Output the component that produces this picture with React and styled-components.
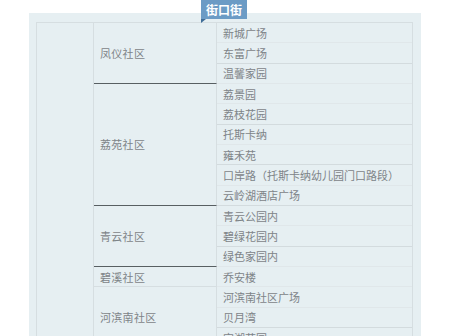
import React from "react";
import styled, { createGlobalStyle } from "styled-components";

const communities = [
  { name: "凤仪社区", places: ["新城广场", "东富广场", "温馨家园"], closed: true },
  {
    name: "荔苑社区",
    places: [
      "荔景园",
      "荔枝花园",
      "托斯卡纳",
      "雍禾苑",
      "口岸路（托斯卡纳幼儿园门口路段）",
      "云岭湖酒店广场",
    ],
    closed: true,
  },
  { name: "青云社区", places: ["青云公园内", "碧绿花园内", "绿色家园内"], closed: true },
  { name: "碧溪社区", places: ["乔安楼"], closed: false },
  { name: "河滨南社区", places: ["河滨南社区广场", "贝月湾", "宝湖花园"], closed: false },
];

const GlobalStyle = createGlobalStyle`
  body {
    margin: 0;
    background: #ffffff;
    font-family: "Noto Sans CJK SC", "Noto Sans", sans-serif;
  }
`;

const Page = styled.div`
  padding: 13px 0 0 29px;
  height: 336px;
  box-sizing: border-box;
  overflow: hidden;
`;

const Panel = styled.div`
  position: relative;
  width: 392px;
  padding: 9px 8px 0 7px;
  box-sizing: border-box;
  background: #e6eff2;
`;

const Badge = styled.div`
  position: absolute;
  left: 172px;
  top: -13px;
  height: 19px;
  padding: 0 5px;
  display: flex;
  align-items: center;
  background: #6b9bc5;
  color: #ffffff;
  font-size: 12px;
  font-weight: 700;
  line-height: 19px;

  &::after {
    content: "";
    position: absolute;
    left: 0;
    bottom: -4px;
    border-top: 4px solid #3f6d98;
    border-right: 5px solid transparent;
  }
`;

const Table = styled.div`
  display: flex;
  border-top: 1px solid #d6dee1;
  border-left: 1px solid #d6dee1;
`;

const StreetCell = styled.div`
  width: 56px;
  flex-shrink: 0;
  border-right: 1px solid #d6dee1;
`;

const Communities = styled.div`
  flex: 1;
  display: flex;
  flex-direction: column;
`;

const Community = styled.div`
  display: grid;
  grid-template-columns: 123px 1fr;
`;

const CommunityName = styled.div`
  display: flex;
  align-items: center;
  padding-left: 6px;
  border-right: 1px solid #d6dee1;
  border-bottom: 1px solid ${(p) => (p.$closed ? "#585f62" : "#d6dee1")};
  color: #7e8488;
  font-size: 11px;
  letter-spacing: 0.3px;
`;

const Places = styled.div`
  display: flex;
  flex-direction: column;
  border-right: 1px solid #d6dee1;
`;

const Place = styled.div`
  height: calc(61px / 3);
  box-sizing: border-box;
  padding-left: 6px;
  display: flex;
  align-items: center;
  border-bottom: 1px solid ${(p) => (p.$soft ? "#e0e7ea" : "#d3dbde")};
  color: #7e8488;
  font-size: 11px;
  white-space: nowrap;
`;

export default function App() {
  return (
    <>
      <GlobalStyle />
      <Page>
        <Panel>
          <Badge>街口街</Badge>
          <Table>
            <StreetCell />
            <Communities>
              {communities.map((c) => (
                <Community key={c.name}>
                  <CommunityName $closed={c.closed}>{c.name}</CommunityName>
                  <Places>
                    {c.places.map((p, i) => (
                      <Place key={p} $soft={i % 2 === 0}>
                        {p}
                      </Place>
                    ))}
                  </Places>
                </Community>
              ))}
            </Communities>
          </Table>
        </Panel>
      </Page>
    </>
  );
}
